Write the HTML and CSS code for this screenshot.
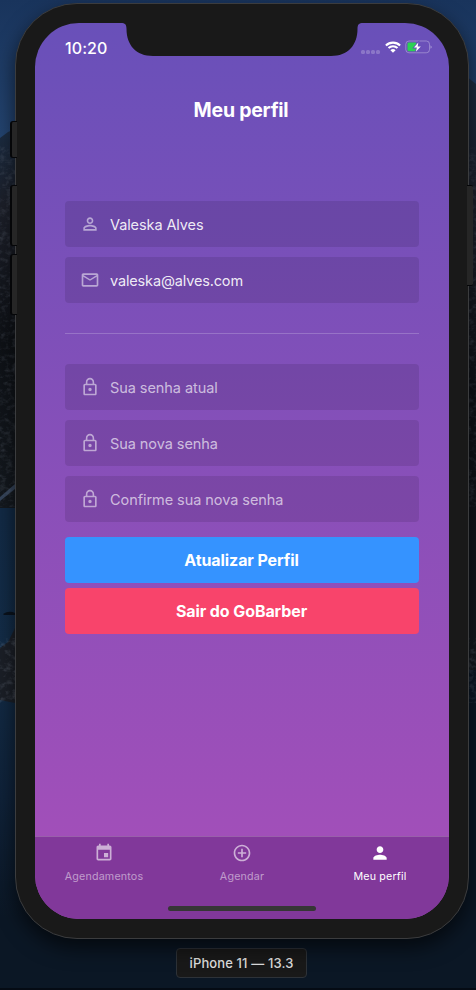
FILE: index.html
```html
<!DOCTYPE html>
<html lang="pt-BR">
<head>
<meta charset="utf-8">
<title>Meu perfil</title>
<link rel="stylesheet" href="styles.css">
</head>
<body>
<svg class="wallpaper" viewBox="0 0 476 990" preserveAspectRatio="none" aria-hidden="true">
  <defs>
    <linearGradient id="sky" x1="0" y1="0" x2="0" y2="1">
      <stop offset="0" stop-color="#19345c"/>
      <stop offset="1" stop-color="#254672"/>
    </linearGradient>
    <linearGradient id="cliff" x1="0" y1="0" x2="0" y2="1">
      <stop offset="0" stop-color="#1b2c42"/>
      <stop offset=".2" stop-color="#1c1f29"/>
      <stop offset=".55" stop-color="#0e1116"/>
      <stop offset="1" stop-color="#14191f"/>
    </linearGradient>
    <linearGradient id="sea" x1="0" y1="0" x2="0" y2="1">
      <stop offset="0" stop-color="#122a45"/>
      <stop offset=".3" stop-color="#132c47"/>
      <stop offset=".6" stop-color="#0f2239"/>
      <stop offset=".85" stop-color="#0b1725"/>
    </linearGradient>
    <filter id="grain" x="0" y="0" width="100%" height="100%">
      <feTurbulence type="fractalNoise" baseFrequency=".16 .22" numOctaves="3" seed="4"/>
      <feColorMatrix values="0 0 0 0 .3  0 0 0 0 .35  0 0 0 0 .45  1.6 0 0 0 -.75"/>
    </filter>
  </defs>
  <rect width="476" height="160" fill="url(#sky)"/>
  <path d="M0 138L8 132L15 129V510H0Z" fill="url(#cliff)"/>
  <path d="M466 76L476 84V680H466Z" fill="url(#cliff)"/>
  <rect y="508" width="60" height="482" fill="url(#sea)"/>
  <path d="M466 670H476V990H60V900H466Z" fill="#0b1725"/>
  <path d="M15 628L8 642L0 648V700L15 703Z" fill="#1b1f27"/>
  <path d="M3 614q6-4 12-1v2H4Z" fill="#0a121c"/>
  <path d="M0 497L15 484V489L0 501Z" fill="#35445a"/>
  <rect y="145" width="476" height="362" filter="url(#grain)" opacity=".3"/>
  <rect y="638" width="476" height="65" filter="url(#grain)" opacity=".4"/>
  <rect y="988" width="476" height="2" fill="#050b14"/>
</svg>

<main class="simulator">
  <div class="phone">
    <span class="key key-mute"></span>
    <span class="key key-up"></span>
    <span class="key key-down"></span>
    <span class="key key-power"></span>

    <div class="screen">
      <svg class="notch" viewBox="0 0 242 33" aria-hidden="true"><path d="M0 0C4 0 5.500 1.500 5.500 6C5.500 22 15 33 32 33H210C227 33 236.500 22 236.500 6C236.500 1.500 238 0 242 0Z"/></svg>

      <header class="status">
        <span class="clock">10:20</span>
        <div class="indicators">
          <span class="signal"><i></i><i></i><i></i><i></i></span>
          <svg class="wifi" viewBox="0 0 16 12" aria-hidden="true"><path d="M.9 4.500A10.200 10.200 0 0 1 15.100 4.500M3.500 7.100A6.500 6.500 0 0 1 12.500 7.100"/><path class="solid" d="M8 11.800L5.400 9.200A3.700 3.700 0 0 1 10.600 9.200Z"/></svg>
          <svg class="battery" viewBox="0 0 27 14" aria-hidden="true">
            <rect class="case" x=".8" y="1" width="23.700" height="11.800" rx="3.200"/>
            <path class="cap" d="M25.500 5.200Q28 7 25.500 8.800Z"/>
            <rect class="charge" x="2.500" y="2.600" width="9" height="8.600" rx="1.200"/>
            <path class="bolt" d="M13.300 2.600L9 7.600H11.900L10.900 11.800L15.800 6.400H12.700Z"/>
          </svg>
        </div>
      </header>

      <section class="profile">
        <h1>Meu perfil</h1>

        <form class="form">
          <label class="field">
            <svg class="icon" viewBox="0 0 24 24"><path d="M12 5.900a2.100 2.100 0 1 1 0 4.200 2.100 2.100 0 0 1 0-4.200m0 9c2.970 0 6.100 1.460 6.100 2.100v1.100H5.900V17c0-.64 3.130-2.100 6.100-2.100M12 4C9.790 4 8 5.790 8 8s1.790 4 4 4 4-1.790 4-4-1.790-4-4-4zm0 9c-2.670 0-8 1.340-8 4v3h16v-3c0-2.660-5.330-4-8-4z"/></svg>
            <span class="value">Valeska Alves</span>
          </label>
          <label class="field">
            <svg class="icon" viewBox="0 0 24 24"><path d="M20 4H4c-1.100 0-1.990.9-1.990 2L2 18c0 1.100.9 2 2 2h16c1.100 0 2-.9 2-2V6c0-1.100-.9-2-2-2zm0 14H4V8l8 5 8-5v10zm-8-7L4 6h16l-8 5z"/></svg>
            <span class="value email">valeska@alves.com</span>
          </label>

          <hr class="separator">

          <label class="field">
            <svg class="icon" viewBox="0 0 24 24"><path d="M12 17c1.100 0 2-.9 2-2s-.9-2-2-2-2 .9-2 2 .9 2 2 2zm6-9h-1V6c0-2.760-2.240-5-5-5S7 3.240 7 6v2H6c-1.100 0-2 .9-2 2v10c0 1.100.9 2 2 2h12c1.100 0 2-.9 2-2V10c0-1.100-.9-2-2-2zM8.900 6c0-1.710 1.390-3.100 3.100-3.100s3.100 1.390 3.100 3.100v2H8.900V6zM18 20H6V10h12v10z"/></svg>
            <span class="hint">Sua senha atual</span>
          </label>
          <label class="field">
            <svg class="icon" viewBox="0 0 24 24"><path d="M12 17c1.100 0 2-.9 2-2s-.9-2-2-2-2 .9-2 2 .9 2 2 2zm6-9h-1V6c0-2.760-2.240-5-5-5S7 3.240 7 6v2H6c-1.100 0-2 .9-2 2v10c0 1.100.9 2 2 2h12c1.100 0 2-.9 2-2V10c0-1.100-.9-2-2-2zM8.900 6c0-1.710 1.390-3.100 3.100-3.100s3.100 1.390 3.100 3.100v2H8.900V6zM18 20H6V10h12v10z"/></svg>
            <span class="hint">Sua nova senha</span>
          </label>
          <label class="field">
            <svg class="icon" viewBox="0 0 24 24"><path d="M12 17c1.100 0 2-.9 2-2s-.9-2-2-2-2 .9-2 2 .9 2 2 2zm6-9h-1V6c0-2.760-2.240-5-5-5S7 3.240 7 6v2H6c-1.100 0-2 .9-2 2v10c0 1.100.9 2 2 2h12c1.100 0 2-.9 2-2V10c0-1.100-.9-2-2-2zM8.900 6c0-1.710 1.390-3.100 3.100-3.100s3.100 1.390 3.100 3.100v2H8.900V6zM18 20H6V10h12v10z"/></svg>
            <span class="hint">Confirme sua nova senha</span>
          </label>

          <button class="button update" type="button">Atualizar Perfil</button>
          <button class="button logout" type="button">Sair do GoBarber</button>
        </form>
      </section>

      <nav class="tabs">
        <a class="tab">
          <svg class="icon" viewBox="0 0 24 24"><path d="M17 12h-5v5h5v-5zM16 1v2H8V1H6v2H5c-1.110 0-1.990.9-1.990 2L3 19c0 1.100.89 2 2 2h14c1.100 0 2-.9 2-2V5c0-1.100-.9-2-2-2h-1V1h-2zm3 18H5V8h14v11z"/></svg>
          <span>Agendamentos</span>
        </a>
        <a class="tab">
          <svg class="icon" viewBox="0 0 24 24"><path d="M13 7h-2v4H7v2h4v4h2v-4h4v-2h-4V7zm-1-5C6.480 2 2 6.480 2 12s4.480 10 10 10 10-4.480 10-10S17.520 2 12 2zm0 18c-4.410 0-8-3.590-8-8s3.590-8 8-8 8 3.590 8 8-3.590 8-8 8z"/></svg>
          <span>Agendar</span>
        </a>
        <a class="tab active">
          <svg class="icon" viewBox="0 0 24 24"><path d="M12 12c2.210 0 4-1.790 4-4s-1.790-4-4-4-4 1.790-4 4 1.790 4 4 4zm0 2c-2.670 0-8 1.340-8 4v2h16v-2c0-2.660-5.330-4-8-4z"/></svg>
          <span>Meu perfil</span>
        </a>
      </nav>
      <span class="home-indicator"></span>
    </div>
  </div>
  <div class="device-name">iPhone 11 — 13.3</div>
</main>
</body>
</html>
```
FILE: styles.css
```css
* {
  box-sizing: border-box;
}

body {
  margin: 0;
  height: 990px;
  overflow: hidden;
  background: #0b1725;
  color: #fff;
  font-family: Inter, Roboto, "Liberation Sans", sans-serif;
}

.wallpaper {
  position: absolute;
  left: 0;
  top: 0;
  width: 476px;
  height: 990px;
}

.simulator {
  position: relative;
  display: flex;
  flex-direction: column;
  align-items: center;
  width: 454px;
  margin-left: 15px;
  padding-top: 3px;
}

.phone {
  position: relative;
  width: 454px;
  height: 936px;
  padding: 19px;
  border: 1px solid #3b3c3e;
  border-radius: 62px;
  background: #191919;
  box-shadow: 0 9px 20px rgba(0, 0, 0, .6);
}

.key {
  position: absolute;
  left: -6px;
  width: 7px;
  background: #262626;
  border: 1px solid #050608;
  border-left-width: 2px;
  border-right: 0;
  border-radius: 3px 0 0 3px;
}

.key-mute { top: 117px; height: 37px; }
.key-up { top: 181px; height: 61px; }
.key-down { top: 250px; height: 61px; }

.key-power {
  left: auto;
  right: -5px;
  top: 181px;
  width: 6px;
  height: 101px;
  border-width: 1px 1px 1px 0;
  border-radius: 0 2px 2px 0;
}

.screen {
  position: relative;
  display: flex;
  flex-direction: column;
  height: 896px;
  overflow: hidden;
  border-radius: 44px;
  background: linear-gradient(#6950b9, #a14fb9 813px);
}

.notch {
  position: absolute;
  left: 86px;
  top: 0;
  width: 242px;
  height: 33px;
  fill: #191919;
}

.status {
  display: flex;
  justify-content: space-between;
  height: 44px;
  padding: 15px 17px 0 30px;
}

.clock {
  font-size: 16px;
  font-weight: 550;
  line-height: 20px;
  letter-spacing: .1px;
}

.indicators {
  display: flex;
  align-items: flex-start;
  padding-top: 2px;
}

.signal {
  display: flex;
  gap: 1px;
  padding-top: 9.5px;
  margin-right: 5px;
}

.signal i {
  width: 4px;
  height: 4px;
  border-radius: 1.5px;
  background: rgba(255, 255, 255, .22);
}

.wifi {
  width: 16px;
  height: 12px;
  margin: 1px 4px 0 0;
  fill: none;
  stroke: #fff;
  stroke-width: 2.1;
}

.wifi .solid {
  fill: #fff;
  stroke: none;
}

.battery {
  width: 27px;
  height: 14px;
}

.case {
  fill: none;
  stroke: rgba(255, 255, 255, .3);
  stroke-width: 1;
}

.cap { fill: rgba(255, 255, 255, .4); }
.charge { fill: #2bd154; }

.bolt {
  fill: #fff;
  stroke: #6950b9;
  stroke-width: 1.6;
  paint-order: stroke;
}

.profile {
  display: flex;
  flex: 1;
  flex-direction: column;
  padding: 30px 30px 0;
}

h1 {
  margin: 0;
  padding-right: 2px;
  font-size: 19.5px;
  font-weight: 650;
  line-height: 26px;
  text-align: center;
  letter-spacing: -.25px;
}

.form {
  display: flex;
  flex-direction: column;
  margin-top: 78px;
}

.field {
  display: flex;
  align-items: center;
  height: 46px;
  margin-bottom: 10px;
  padding: 0 15px;
  border-radius: 4px;
  background: rgba(0, 0, 0, .1);
}

.icon {
  width: 20px;
  height: 20px;
  fill: rgba(255, 255, 255, .6);
}

.field .icon {
  margin-right: 10px;
  fill: rgba(255, 255, 255, .52);
}

.value,
.hint {
  padding-top: 1px;
  font-size: 14.5px;
  line-height: 20px;
  letter-spacing: -.1px;
  color: rgba(255, 255, 255, .9);
}

.value.email { letter-spacing: -.15px; }

.hint {
  color: rgba(255, 255, 255, .65);
  letter-spacing: -.06px;
}

.separator {
  width: 100%;
  height: 1px;
  margin: 20px 0 30px;
  border: 0;
  background: rgba(255, 255, 255, .2);
}

.button {
  height: 46px;
  margin: 5px 0 0;
  padding: 0 1px 0 0;
  border: 0;
  border-radius: 4px;
  color: #fff;
  font: 650 16px/46px Inter, Roboto, sans-serif;
  letter-spacing: -.09px;
}

.update { background: #3593ff; }
.logout { background: #f8446b; }

.tabs {
  display: grid;
  grid-template-columns: repeat(3, 1fr);
  height: 83px;
  border-top: 1px solid #9960aa;
  background: #81389a;
}

.tab {
  display: flex;
  flex-direction: column;
  align-items: center;
  padding-top: 6px;
  color: rgba(255, 255, 255, .5);
  font-size: 10.7px;
  line-height: 14px;
  letter-spacing: .18px;
}

.tab .icon { margin-right: 1px; }
.tab span { margin-top: 7px; }
.tab.active { color: #fff; }
.tab.active .icon { fill: #fff; }

.home-indicator {
  position: absolute;
  left: 133px;
  bottom: 8px;
  width: 148px;
  height: 5px;
  border-radius: 3px;
  background: #363636;
}

.device-name {
  width: 131px;
  height: 30px;
  margin: 9px 1px 0 0;
  border: 1px solid #2d3238;
  border-radius: 4px;
  background: #191919;
  color: #dedede;
  font-size: 13px;
  font-weight: 500;
  line-height: 29px;
  letter-spacing: .12px;
  text-align: center;
  white-space: nowrap;
}
```
